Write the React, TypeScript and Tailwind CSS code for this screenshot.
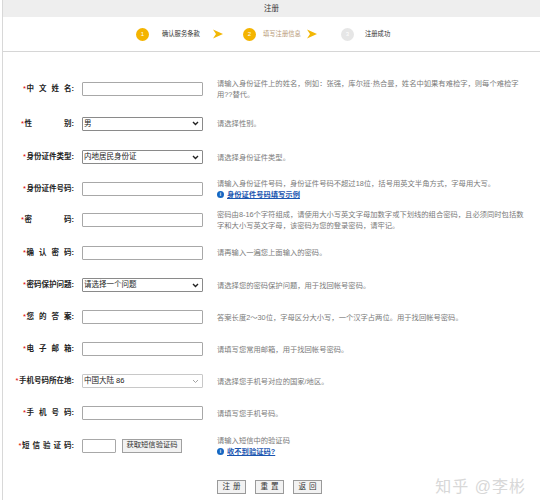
import React from 'react';

const FONT = { fontFamily: '"Liberation Sans", "Noto Sans CJK SC", sans-serif' };

function Chevron({ light }: { light?: boolean }) {
  return (
    <svg width="7" height="5" viewBox="0 0 7 5" className="shrink-0">
      <path d="M1 1l2.5 2.5L6 1" fill="none" stroke={light ? '#9a9a9a' : '#222'} strokeWidth={light ? 0.9 : 1.4} />
    </svg>
  );
}

function StepArrow() {
  return (
    <svg width="10" height="10" viewBox="0 0 10 10" className="block">
      <polygon points="0,0.5 10,5 0,9.5 3,5" fill="#f2b705" />
    </svg>
  );
}

function InfoIcon() {
  return (
    <span className="inline-flex w-[7px] h-[7px] rounded-full bg-[#1667c2] text-white text-[5px] font-bold items-center justify-center leading-none mr-[3px]">
      i
    </span>
  );
}

function TextBox({ w = 'w-[121px]' }: { w?: string }) {
  return <div className={`${w} h-[14px] border border-[#a8a8a8] bg-white rounded-[1px]`} />;
}

function SelectBox({ value, light }: { value: string; light?: boolean }) {
  return (
    <div
      className={`w-[121px] h-[14px] border ${light ? 'border-[#c8c8c8]' : 'border-[#8a8a8a]'} bg-white rounded-[1px] flex items-center justify-between pl-[1px] pr-[3px] text-[7.5px] text-[#222]`}
    >
      <span>{value}</span>
      <Chevron light={light} />
    </div>
  );
}

function Label({ chars, justify, gap = 'gap-[5px]' }: { chars: string[]; justify?: boolean; gap?: string }) {
  return (
    <div className="w-[71px] shrink-0 flex justify-end">
      <div className={`flex items-baseline whitespace-nowrap text-[7.5px] font-bold text-[#222] ${justify ? 'w-[53px]' : ''}`}>
        <span className="text-[#d00] font-normal mr-[0.5px]">*</span>
        <span className={`flex ${justify ? 'flex-1 justify-between' : gap}`}>
          {chars.map((c, i) => (
            <span key={i}>{c}</span>
          ))}
        </span>
        <span>:</span>
      </div>
    </div>
  );
}

function Help({ children }: { children: React.ReactNode }) {
  return <div className="text-[7.3px] leading-[11px] text-[#7a7a7a]">{children}</div>;
}

function Row({ h, label, field, help }: { h: string; label: React.ReactNode; field: React.ReactNode; help: React.ReactNode }) {
  return (
    <div className={`flex items-center ${h}`}>
      {label}
      <div className="w-[143px] shrink-0 pl-[8px] flex items-center">{field}</div>
      <div className="flex-1">{help}</div>
    </div>
  );
}

function Btn({ text }: { text: string }) {
  return (
    <div className="h-[14px] w-[29px] border border-[#9a9a9a] bg-[#f2f2f2] text-[7.5px] text-[#333] flex items-center justify-center gap-[3px]">
      {text.split('').map((c, i) => (
        <span key={i}>{c}</span>
      ))}
    </div>
  );
}

export default function App() {
  return (
    <div className="w-[540px] h-[500px] bg-white overflow-hidden relative" style={FONT}>
      <div className="ml-[2px] border-l border-[#d8d8d8] h-full">
        <div className="h-[17px] bg-[#eeeeee] flex items-center justify-center text-[7.5px] text-[#333]">注册</div>

        {/* steps */}
        <div className="h-[35px] border-b border-[#d6d6d6] flex items-center text-[6.3px] whitespace-nowrap">
          <div className="ml-[133px] flex items-center">
            <span className="w-[13px] h-[13px] rounded-full bg-[#f4b400] text-white text-[6px] flex items-center justify-center">1</span>
            <span className="ml-[13px] w-[38px] text-[#333]">确认服务条款</span>
            <span className="ml-[13px]"><StepArrow /></span>
            <span className="ml-[20px] w-[13px] h-[13px] rounded-full bg-[#f4b400] text-white text-[6px] flex items-center justify-center">2</span>
            <span className="ml-[7px] w-[38px] text-[#b89a78]">填写注册信息</span>
            <span className="ml-[6px]"><StepArrow /></span>
            <span className="ml-[24px] w-[13px] h-[13px] rounded-full bg-[#e6e6e6] text-white text-[6px] flex items-center justify-center">3</span>
            <span className="ml-[11px] text-[#333]">注册成功</span>
          </div>
        </div>

        <div className="pt-[20px]">
          <Row
            h="h-[34px]"
            label={<Label chars={['中', '文', '姓', '名']} />}
            field={<TextBox />}
            help={
              <Help>
                请输入身份证件上的姓名，例如：张强，库尔班·热合曼，姓名中如果有难检字，则每个难检字
                <br />
                用??替代。
              </Help>
            }
          />
          <Row h="h-[35px]" label={<Label chars={['性', '别']} justify />} field={<SelectBox value="男" />} help={<Help>请选择性别。</Help>} />
          <Row
            h="h-[32px]"
            label={<Label chars={['身份证件类型']} />}
            field={<SelectBox value="内地居民身份证" />}
            help={<Help>请选择身份证件类型。</Help>}
          />
          <Row
            h="h-[31px]"
            label={<Label chars={['身份证件号码']} />}
            field={<TextBox />}
            help={
              <Help>
                请输入身份证件号码，身份证件号码不超过18位，括号用英文半角方式，字母用大写。
                <div className="flex items-center">
                  <InfoIcon />
                  <span className="text-[#1a55b0] underline font-bold">身份证件号码填写示例</span>
                </div>
              </Help>
            }
          />
          <Row
            h="h-[32px]"
            label={<Label chars={['密', '码']} justify />}
            field={<TextBox />}
            help={
              <Help>
                密码由8-16个字符组成，请使用大小写英文字母加数字或下划线的组合密码，且必须同时包括数
                <br />
                字和大小写英文字母，该密码为您的登录密码，请牢记。
              </Help>
            }
          />
          <Row h="h-[33px]" label={<Label chars={['确', '认', '密', '码']} />} field={<TextBox />} help={<Help>请再输入一遍您上面输入的密码。</Help>} />
          <Row
            h="h-[32px]"
            label={<Label chars={['密码保护问题']} />}
            field={<SelectBox value="请选择一个问题" />}
            help={<Help>请选择您的密码保护问题，用于找回帐号密码。</Help>}
          />
          <Row
            h="h-[32px]"
            label={<Label chars={['您', '的', '答', '案']} />}
            field={<TextBox />}
            help={<Help>答案长度2～30位，字母区分大小写，一个汉字占两位。用于找回帐号密码。</Help>}
          />
          <Row h="h-[32px]" label={<Label chars={['电', '子', '邮', '箱']} />} field={<TextBox />} help={<Help>请填写您常用邮箱，用于找回帐号密码。</Help>} />
          <Row
            h="h-[32px]"
            label={<Label chars={['手机号码所在地']} />}
            field={<SelectBox value="中国大陆 86" light />}
            help={<Help>请选择您手机号对应的国家/地区。</Help>}
          />
          <Row h="h-[32px]" label={<Label chars={['手', '机', '号', '码']} />} field={<TextBox />} help={<Help>请填写您手机号码。</Help>} />
          <Row
            h="h-[33px]"
            label={<Label chars={['短', '信', '验', '证', '码']} gap="gap-[3px]" />}
            field={
              <div className="flex items-center gap-[6px]">
                <TextBox w="w-[34px]" />
                <div className="h-[14px] w-[60px] border border-[#a0a0a0] bg-[#f2f2f2] text-[7.3px] text-[#333] flex items-center justify-center whitespace-nowrap">获取短信验证码</div>
              </div>
            }
            help={
              <Help>
                请输入短信中的验证码
                <div className="flex items-center">
                  <InfoIcon />
                  <span className="text-[#1a55b0] underline font-bold">收不到验证码?</span>
                </div>
              </Help>
            }
          />
          <div className="flex items-center h-[28px] mt-[11px]">
            <div className="w-[214px]" />
            <div className="flex items-center gap-[9px]">
              <Btn text="注册" />
              <Btn text="重置" />
              <Btn text="返回" />
            </div>
            <div className="ml-auto mr-[14px] text-[16px] text-[#d8d8d8] tracking-[1px]">知乎 @李彬</div>
          </div>
        </div>
      </div>
    </div>
  );
}
